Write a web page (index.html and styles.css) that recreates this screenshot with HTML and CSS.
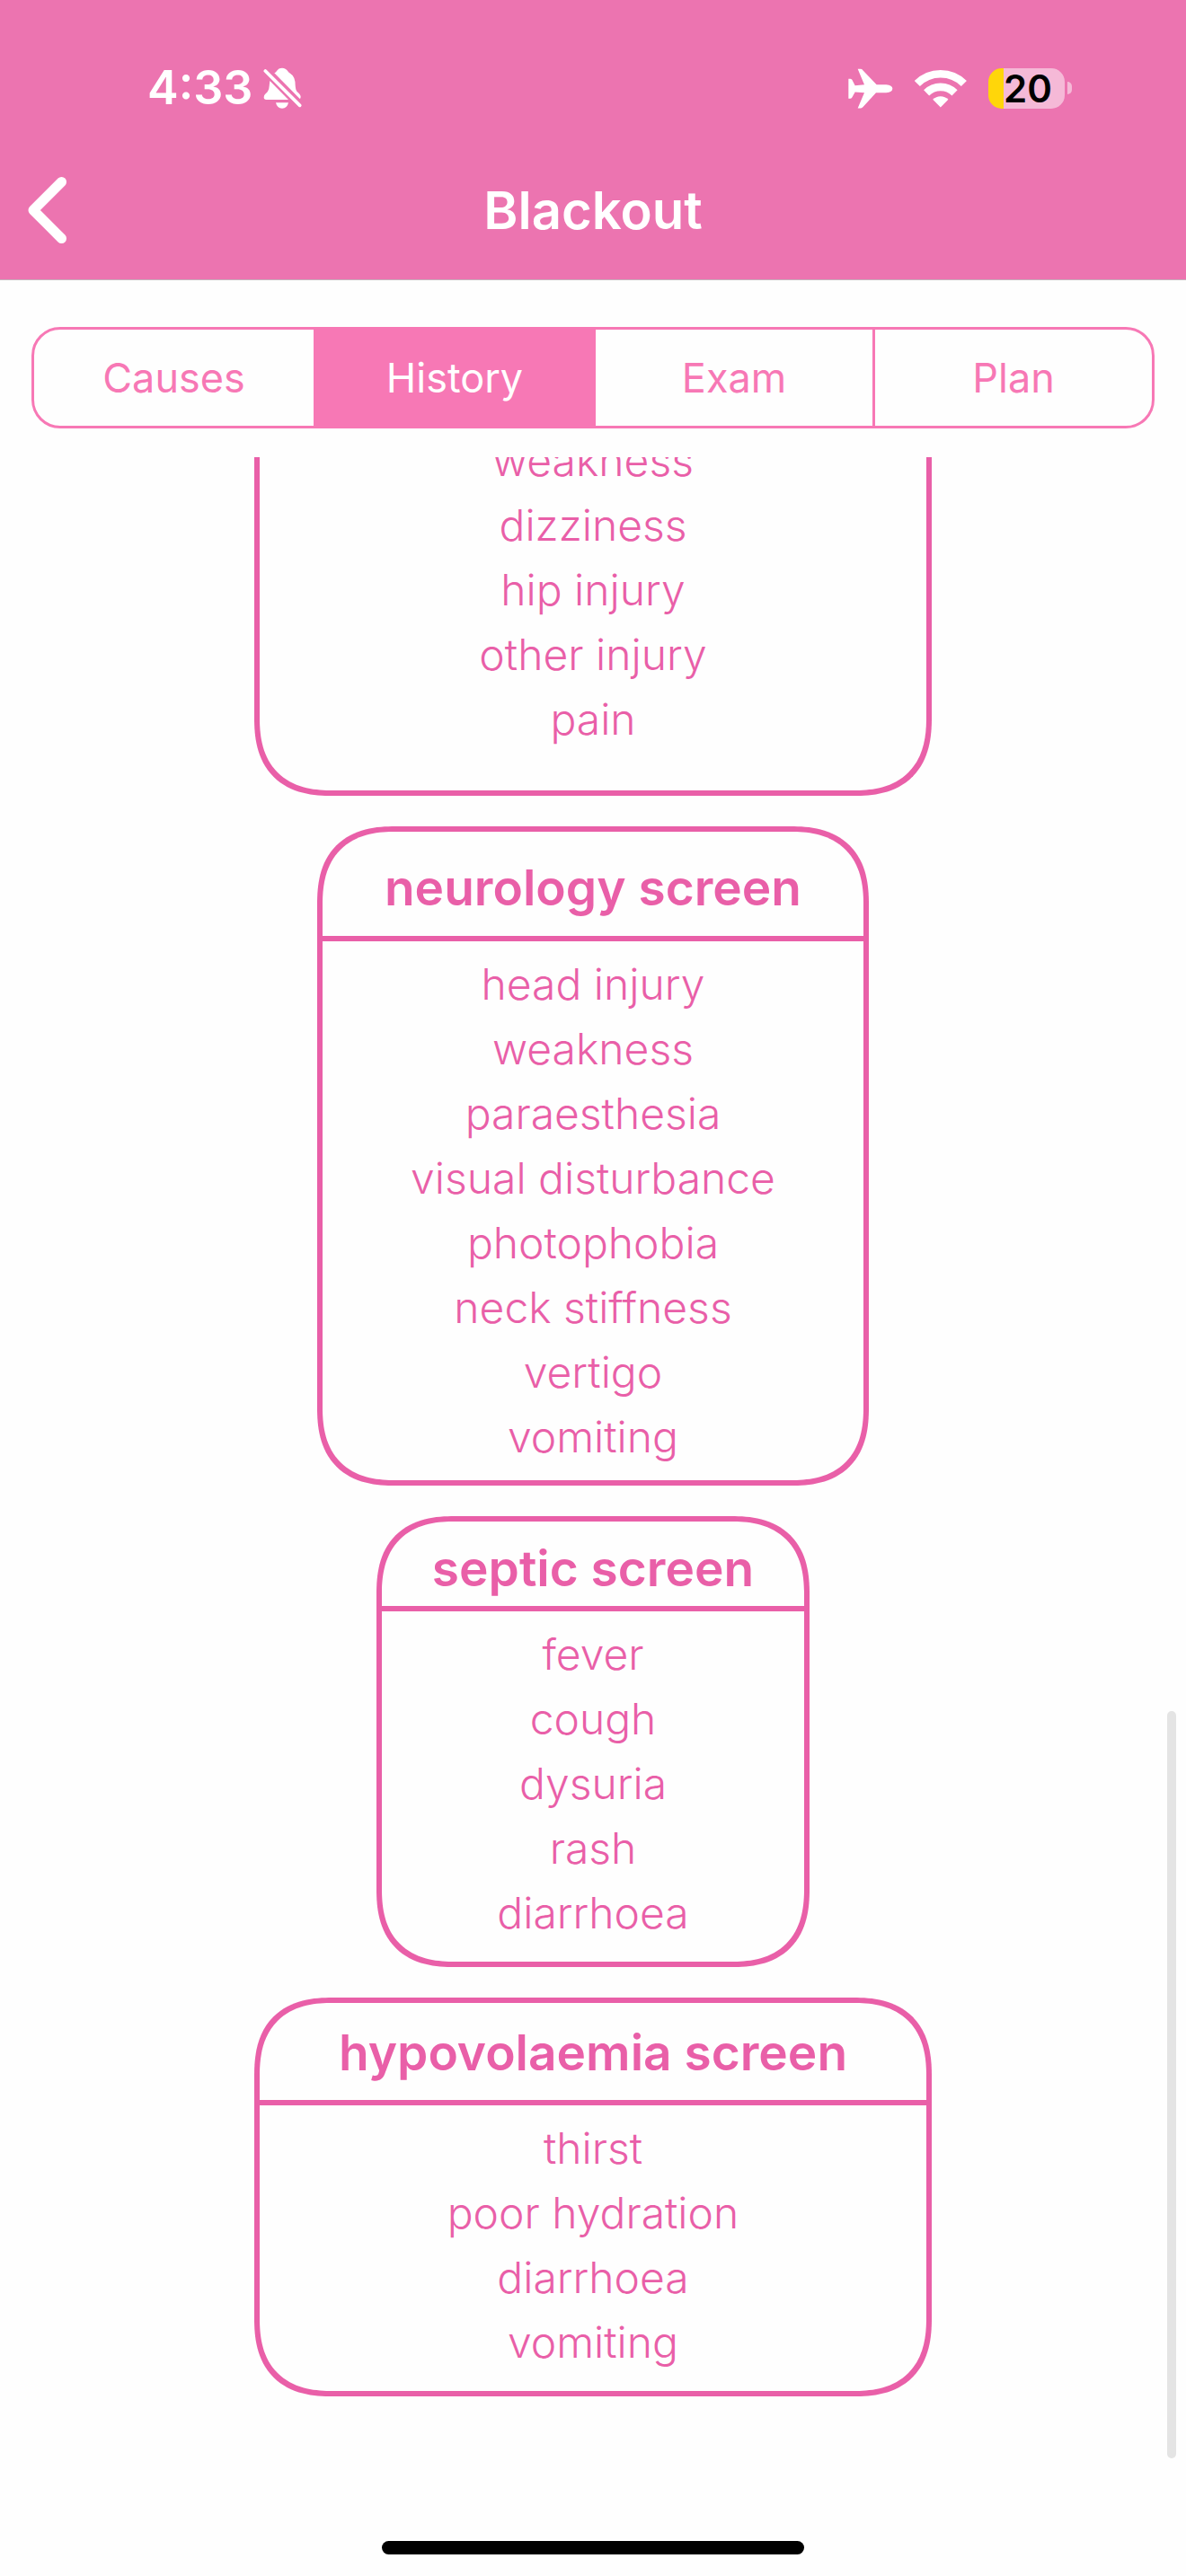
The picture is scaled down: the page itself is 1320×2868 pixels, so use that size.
FILE: index.html
```html
<!DOCTYPE html>
<html lang="en">
<head>
<meta charset="utf-8">
<meta name="viewport" content="width=device-width, initial-scale=1">
<title>Blackout</title>
<link rel="stylesheet" href="styles.css">
</head>
<body>
<header class="header">
  <div class="status">
    <div class="status-group">
      <span class="time">4:33</span>
      <svg class="icon-bell" viewBox="880 105 129 138" aria-hidden="true">
        <path d="M917 124Q922 122 925 117Q931 107 943 107Q955 107 962 118Q964 122 970 125Q987 135 987 165Q988 180 992 185Q1005 195 1005 203Q1005 208 1002 210Z"/>
        <path d="M902 150L964 213H890Q882 213 882 205Q882 198 888 193Q899 184 900 168Z"/>
        <path d="M922 223H964Q960 242 943 242Q926 242 922 223Z"/>
        <path d="M887 117L1002 232" fill="none" stroke="#fff" stroke-width="11" stroke-linecap="round"/>
      </svg>
    </div>
    <div class="status-group status-right">
      <svg class="icon-plane" viewBox="200 107 150 134" aria-hidden="true">
        <path d="M232 109H241Q246 109 249 113L295 161H327Q348 163 348 174Q348 187 327 188H293L249 236Q245 240 241 240H232L254 188L223 186L213 204Q210 208 207 208H201V142H207Q210 142 213 145L223 164L254 161Z"/>
      </svg>
      <svg class="icon-wifi" viewBox="418 104 175 128" aria-hidden="true">
        <path d="M426.500 151.500A111 111 0 0 1 583.500 151.500M457.600 182.600A67 67 0 0 1 552.400 182.600" fill="none" stroke="#fff" stroke-width="26"/>
        <path d="M505 231L479 205A37 37 0 0 1 531 205Z"/>
      </svg>
      <div class="battery"><span class="battery-level">20</span><span class="battery-tip"></span></div>
    </div>
  </div>
  <div class="titlebar">
    <button class="back" type="button" aria-label="Back">
      <svg class="icon-back" viewBox="0 0 43 74" aria-hidden="true"><path d="M37.500 5.500L6 37L37.500 68.500"/></svg>
    </button>
    <h1 class="title">Blackout</h1>
  </div>
</header>
<nav class="tabs">
  <button class="tab" type="button">Causes</button>
  <button class="tab tab-active" type="button" aria-current="true">History</button>
  <button class="tab" type="button">Exam</button>
  <button class="tab" type="button">Plan</button>
</nav>
<main class="content">
  <section class="card card-wide card-clipped">
    <ul class="items"><li>weakness</li><li>dizziness</li><li>hip injury</li><li>other injury</li><li>pain</li></ul>
  </section>
  <section class="card card-medium">
    <h2 class="card-title title-tall">neurology screen</h2>
    <ul class="items items-snug"><li>head injury</li><li>weakness</li><li>paraesthesia</li><li>visual disturbance</li><li>photophobia</li><li>neck stiffness</li><li>vertigo</li><li>vomiting</li></ul>
  </section>
  <section class="card card-narrow">
    <h2 class="card-title title-short">septic screen</h2>
    <ul class="items"><li>fever</li><li>cough</li><li>dysuria</li><li>rash</li><li>diarrhoea</li></ul>
  </section>
  <section class="card card-wide">
    <h2 class="card-title">hypovolaemia screen</h2>
    <ul class="items"><li>thirst</li><li>poor hydration</li><li>diarrhoea</li><li>vomiting</li></ul>
  </section>
  <div class="scrollbar"></div>
</main>
<footer class="footer"><div class="home-indicator"></div></footer>
</body>
</html>
```
FILE: styles.css
```css
* {
  box-sizing: border-box;
}

body {
  margin: 0;
  min-height: 100vh;
  display: flex;
  flex-direction: column;
  background: #fefefe;
  font-family: Inter, "Liberation Sans", sans-serif;
}

button {
  margin: 0;
  padding: 0;
  border: 0;
  background: none;
  font: inherit;
  color: inherit;
}

svg {
  display: block;
  fill: #fff;
}

.header {
  background: #ec74b0;
  border-bottom: 1px solid #c4b4bc;
  color: #fff;
}

.status {
  height: 156px;
  padding: 40px 127px 0 164px;
  display: flex;
  align-items: center;
  justify-content: space-between;
}

.status-group {
  display: flex;
  align-items: center;
  gap: 12px;
}

.status-right {
  gap: 24px;
}

.time {
  font-size: 52px;
  font-weight: 600;
  line-height: 60px;
}

.icon-bell {
  width: 43px;
  height: 46px;
}

.icon-plane {
  width: 50px;
  height: 45px;
}

.icon-wifi {
  width: 58px;
  height: 43px;
}

.battery {
  display: flex;
  align-items: center;
  gap: 3px;
}

.battery-level {
  width: 85px;
  padding-left: 17px;
  border-radius: 15px;
  background: linear-gradient(to right, #ffd60a 17px, #f5b9d7 17px);
  color: #000;
  font-size: 42px;
  font-weight: 600;
  line-height: 45px;
}

.battery-tip {
  width: 5px;
  height: 14px;
  border-radius: 0 5px 5px 0;
  background: #f5b9d7;
}

.titlebar {
  height: 155px;
  padding: 0 31px;
  display: grid;
  grid-template-columns: 1fr auto 1fr;
  align-items: center;
}

.back {
  justify-self: start;
}

.icon-back {
  width: 43px;
  height: 74px;
  fill: none;
  stroke: #fff;
  stroke-width: 11px;
  stroke-linecap: round;
  stroke-linejoin: round;
}

.title {
  margin: 0;
  font-size: 58px;
  font-weight: 600;
  line-height: 72px;
}

.tabs {
  margin: 52px 35px 32px;
  height: 113px;
  display: grid;
  grid-template-columns: repeat(4, 1fr);
  border: 3px solid #f778b5;
  border-radius: 32px;
  overflow: hidden;
}

.tab {
  color: #f778b5;
  font-size: 45px;
  line-height: 60px;
}

.tab + .tab {
  border-left: 3px solid #f778b5;
}

.tab-active {
  background: #f778b5;
  color: #fff;
}

.content {
  position: relative;
  flex: 1;
  display: flex;
  flex-direction: column;
  align-items: center;
  gap: 34px;
  overflow: hidden;
  color: #e95fa8;
}

.card {
  max-width: 100%;
  border: 6px solid #e95fa8;
  border-radius: 74px;
  text-align: center;
}

/* Continuous iOS-style corners where the browser can draw them. */
@supports (corner-shape: superellipse(1.3)) {
  .card {
    border-radius: 87px;
    corner-shape: superellipse(1.3);
  }
}

.card-wide {
  width: 754px;
}

.card-medium {
  width: 614px;
}

.card-narrow {
  width: 482px;
}

/* The list is scrolled, so the first card runs on above the viewport. */
.card-clipped {
  margin-top: -44px;
  padding-bottom: 25px;
  border-top: 0;
  border-top-left-radius: 0;
  border-top-right-radius: 0;
}

.card-title {
  margin: 0;
  padding: 19px 0 17px;
  border-bottom: 6px solid #e95fa8;
  font-size: 55px;
  font-weight: 600;
  line-height: 72px;
}

.title-tall {
  padding: 26px 0 18px;
}

.title-short {
  padding: 16px 0 6px;
}

.items {
  margin: 0;
  padding: 12px 0 18px;
  list-style: none;
  font-size: 48px;
  font-weight: 300;
  line-height: 72px;
}

.items-snug {
  padding-bottom: 12px;
}

.scrollbar {
  position: absolute;
  right: 11px;
  bottom: 92px;
  width: 10px;
  height: 832px;
  border-radius: 5px;
  background: #e4e4e4;
}

.footer {
  padding-bottom: 24px;
  display: flex;
  justify-content: center;
}

.home-indicator {
  width: 470px;
  height: 15px;
  border-radius: 8px;
  background: #000;
}
```
